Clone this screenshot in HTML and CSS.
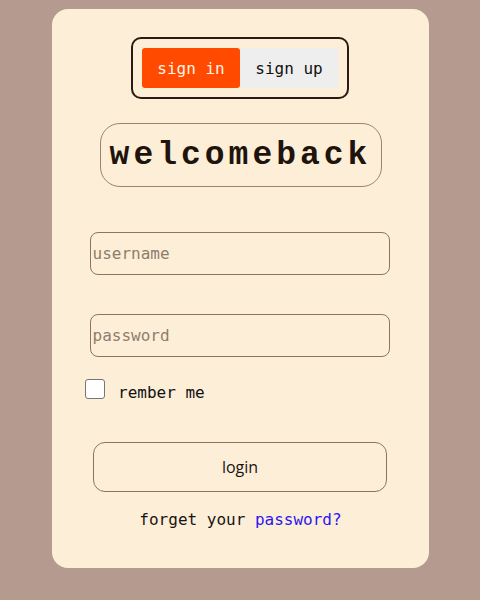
FILE: index.html
```html
<!DOCTYPE html>
<html>
<head>
<meta charset="utf-8">
<link rel="stylesheet" href="styles.css">
</head>
<body>
<div class="card">
  <div class="toggle">
    <button class="tab tab-active">sign in</button>
    <button class="tab">sign up</button>
  </div>
  <div class="welcome">welcomeback</div>
  <input class="field field-user" type="text" placeholder="username">
  <input class="field field-pass" type="password" placeholder="password">
  <label class="remember"><span class="box"></span><span class="remember-text">rember me</span></label>
  <button class="login">login</button>
  <p class="forget">forget your <a class="link" href="#">password?</a></p>
</div>
</body>
</html>
```
FILE: styles.css
```css
html, body {
  margin: 0;
  padding: 0;
}
body {
  background: #b59a8f;
  height: 600px;
  font-family: "DejaVu Sans Mono", monospace;
}
.card {
  box-sizing: border-box;
  width: 377px;
  height: 559px;
  margin: 9px 0 0 52px;
  background: #fdeed8;
  border-radius: 16px;
  display: flex;
  flex-direction: column;
  align-items: center;
  padding-top: 28px;
}
.toggle {
  box-sizing: border-box;
  width: 218px;
  height: 62px;
  border: 2px solid #2a1a10;
  border-radius: 10px;
  padding: 9px;
  display: flex;
  margin-left: -1px;
}
.tab {
  width: 98px;
  height: 40px;
  border: none;
  margin: 0;
  padding: 0;
  font-family: "DejaVu Sans Mono", monospace;
  font-size: 16px;
  background: #eeeeee;
  color: #111;
  border-radius: 0 3px 3px 0;
}
.tab-active {
  background: #ff4a00;
  color: #fff2e6;
  border-radius: 3px;
}
.welcome {
  box-sizing: border-box;
  margin-top: 24px;
  width: 282px;
  height: 64px;
  border: 1px solid #9a8470;
  border-radius: 20px;
  display: flex;
  align-items: center;
  justify-content: center;
  font-family: "Liberation Mono", monospace;
  font-weight: bold;
  font-size: 33px;
  letter-spacing: 4px;
  padding-left: 0;
  color: #1e140c;
}
.field {
  box-sizing: border-box;
  width: 300px;
  height: 43px;
  border: 1px solid #8c7461;
  border-radius: 8px;
  background: transparent;
  padding: 0 2px;
  font-family: "DejaVu Sans Mono", monospace;
  font-size: 16px;
  color: #222;
  outline: none;
  margin-left: -2px;
}
.field::placeholder {
  color: #8f7d6c;
}
.field-user {
  margin-top: 45px;
}
.field-pass {
  margin-top: 39px;
}
.remember {
  align-self: flex-start;
  margin: 22px 0 0 33px;
  display: flex;
  align-items: flex-start;
}
.box {
  box-sizing: border-box;
  width: 20px;
  height: 20px;
  border: 1.5px solid #767676;
  border-radius: 3px;
  background: #fff;
}
.remember-text {
  margin-left: 13px;
  margin-top: 4px;
  line-height: 20px;
  font-size: 16px;
  color: #111;
}
.login {
  box-sizing: border-box;
  margin-top: 39px;
  margin-left: -1px;
  width: 294px;
  height: 50px;
  border: 1px solid #8c7461;
  border-radius: 12px;
  background: transparent;
  font-family: "Open Sans", sans-serif;
  font-size: 16px;
  color: #1a1410;
}
.forget {
  margin: 18px 0 0 0;
  font-size: 16px;
  color: #1a1410;
}
.link {
  color: #2b16f0;
  text-decoration: none;
}
```
